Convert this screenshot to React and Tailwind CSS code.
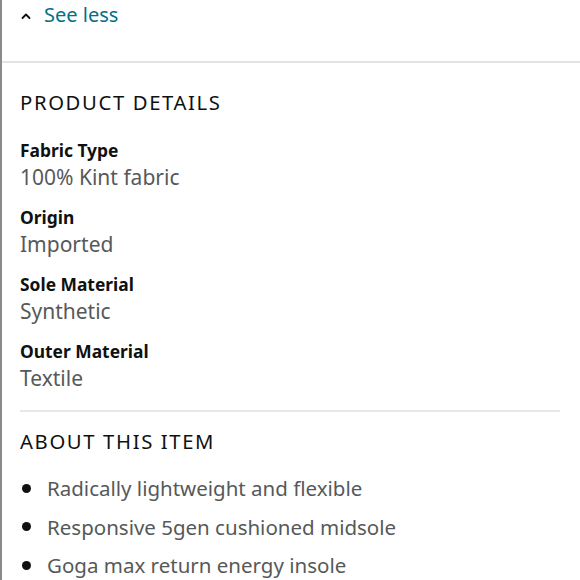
import React from "react";

const details = [
  { label: "Fabric Type", value: "100% Kint fabric" },
  { label: "Origin", value: "Imported" },
  { label: "Sole Material", value: "Synthetic" },
  { label: "Outer Material", value: "Textile" },
];

const bullets = [
  "Radically lightweight and flexible",
  "Responsive 5gen cushioned midsole",
  "Goga max return energy insole",
];

export default function App() {
  return (
    <div
      className="h-[580px] w-[580px] overflow-hidden bg-white border-l-2 border-[#8a8a8a]"
      style={{ fontFamily: '"Noto Sans", Roboto, sans-serif' }}
    >
      <div className="flex h-[63px] items-start border-b-2 border-[#e3e3e3] pl-[18px] pt-[1px]">
        <button className="flex items-center gap-[12px] text-[20px] leading-[28px] text-[#007185]">
          <svg width="12" height="12" viewBox="0 0 12 12" className="mt-[2px]">
            <path d="M2.5 8 L6 4.5 L9.5 8" fill="none" stroke="#111" strokeWidth="1.8" strokeLinecap="round" strokeLinejoin="round" />
          </svg>
          See less
        </button>
      </div>

      <div className="px-[18px]">
        <h2 className="mt-[26px] text-[20.3px] leading-[26px] tracking-[0.08em] text-[#0f1111]">PRODUCT DETAILS</h2>
        <div className="mt-[23px] flex flex-col gap-[14px]">
          {details.map((d) => (
            <div key={d.label}>
              <div className="text-[17.4px] font-bold leading-[24px] text-[#0f1111]">{d.label}</div>
              <div className="mt-[1px] text-[21px] leading-[28px] text-[#565959]">{d.value}</div>
            </div>
          ))}
        </div>
        <div className="mr-[2px] mt-[18px] border-t-2 border-[#e7e7e7]" />
        <h2 className="mt-[16px] text-[20.3px] leading-[26px] tracking-[0.08em] text-[#0f1111]">ABOUT THIS ITEM</h2>
        <ul className="mt-[20px] flex flex-col gap-[10.5px]">
          {bullets.map((b) => (
            <li key={b} className="flex items-center gap-[16px] pl-[2px] text-[20.5px] leading-[28px] text-[#565959]">
              <span className="h-[9px] w-[9px] shrink-0 rounded-full bg-[#0f1111]" />
              {b}
            </li>
          ))}
        </ul>
      </div>
    </div>
  );
}
